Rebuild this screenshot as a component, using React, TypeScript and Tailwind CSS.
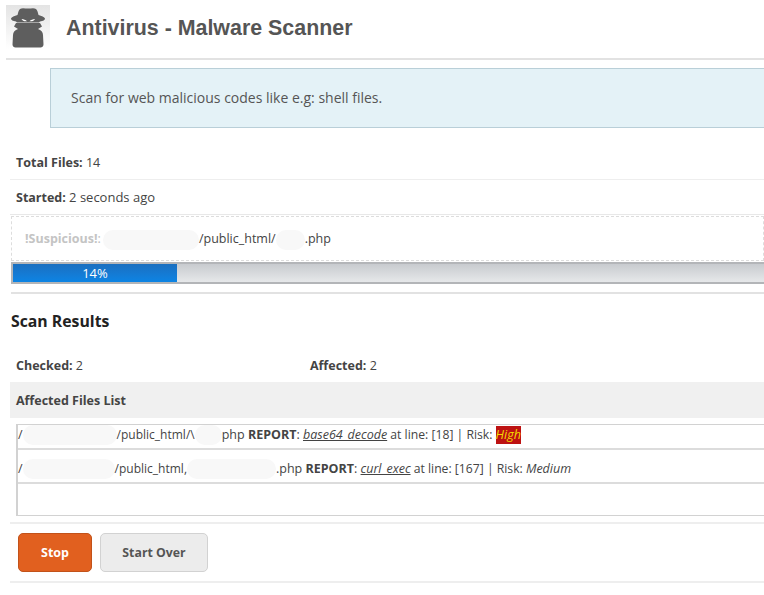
import React from 'react';

const Blob = ({ className }: { className: string }) => (
  <span className={`inline-block align-middle rounded-full bg-[#f8f8f8] ${className}`} />
);

const SpyIcon = () => (
  <div className="w-[44px] h-[44px] shrink-0 bg-gradient-to-b from-[#e4e4e4] to-white">
    <svg viewBox="0 0 44 44" className="w-full h-full">
      {/* hat */}
      <path
        fill="#5e5e5e"
        d="M14 4c2-1.500 5-.5 8-.5s6-1 8 .5c1.500 1.500 2 4 2.500 6 3 1 6 2 6.500 3.500.2 1.500-2 2.500-5 3l-1 1H11l-1-1c-3-.5-5.200-1.500-5-3 .5-1.500 3.500-2.500 6.500-3.500.5-2 1-4.500 2.500-6z"
      />
      {/* face, collar and coat */}
      <path
        fill="#5e5e5e"
        d="M10 18h24l2 3.500-4 2.500c3 1 5 3 5 6l.5 9.500c0 2-1.500 3-3 3H9.500c-1.500 0-3-1-3-3L7 30c0-3 2-5 5-6l-4-2.500z"
      />
      <path fill="#fff" d="M15.500 14c2.200.2 4.200.8 5.500 2.200-2.300.5-4.500-.2-5.500-2.200zM29 14c-2.200.2-4.200.8-5.500 2.200 2.300.5 4.500-.2 5.500-2.200z" />
    </svg>
  </div>
);

export default function App() {
  return (
    <div className="w-[764px] h-[595px] overflow-hidden bg-white text-[#444] text-[12.5px] font-['Open_Sans','Noto_Sans',sans-serif]">
      {/* header */}
      <div className="ml-[6px] h-[60px] pt-[5px] border-b-2 border-[#e2e2e2] flex items-start">
        <SpyIcon />
        <h1 className="ml-[16px] mt-[9px] text-[21.4px] leading-[28px] font-bold text-[#555] font-['Liberation_Sans',Arial,sans-serif]">
          Antivirus - Malware Scanner
        </h1>
      </div>

      <div className="ml-[50px] mt-[8px] h-[60px] pl-[20px] pb-[2px] flex items-center bg-[#e4f2f7] border border-r-0 border-[#b9cfd8] text-[14px] text-[#555]">
        Scan for web malicious codes like e.g: shell files.
      </div>

      <div className="ml-[10px] h-[52px] pt-[26px] pl-[6px] border-b border-[#eee] leading-[18px]">
        <b>Total Files:</b> 14
      </div>
      <div className="ml-[10px] h-[35px] pt-[8px] pl-[6px] border-b border-[#e8e8e8] leading-[18px]">
        <b>Started:</b> <span className="text-[13px]">2 seconds ago</span>
      </div>

      <div className="ml-[11px] mt-[1px] h-[45px] pl-[13px] pt-[2px] flex items-center border border-dashed border-[#ddd] text-[12.5px]">
        <b className="text-[#c4c4c4]">!Suspicious!</b>
        <span className="text-[#bbb]">:</span>
        <Blob className="ml-[2px] w-[96px] h-[20px]" />
        <span>/public_html/</span>
        <Blob className="w-[29px] h-[20px]" />
        <span>.php</span>
      </div>

      <div className="ml-[11px] mt-[1px] h-[22px] border-y-2 border-l-2 border-[#b3b5b8] bg-gradient-to-b from-[#c8cbcf] to-[#e6e8ea] flex">
        <div className="w-[164px] h-[18px] bg-gradient-to-b from-[#1a6fc0] to-[#0c84e4] text-white text-center text-[13px] leading-[19px]">
          14%
        </div>
      </div>

      <div className="ml-[11px] mt-[8px] border-t-2 border-[#e2e2e2]" />

      <h2 className="ml-[11px] mt-[16px] text-[15.8px] leading-[22px] font-bold text-[#222]">Scan Results</h2>

      <div className="ml-[16px] mt-[25px] flex leading-[18px]">
        <div className="w-[294px]">
          <b>Checked:</b> 2
        </div>
        <div>
          <b>Affected:</b> 2
        </div>
      </div>

      <div className="ml-[10px] mt-[7px] h-[36px] pl-[6px] pt-[2px] flex items-center bg-[#f0f0f0] font-bold">Affected Files List</div>

      <div className="ml-[16px] mt-[6px] h-[92px] border-2 border-r-0 border-[#d2d2d2] border-t border-b text-[12.5px]">
        <div className="h-[25px] pb-[3px] flex items-center whitespace-nowrap border-b-2 border-[#dcdcdc]">
          <span>/</span>
          <Blob className="w-[94px] h-[20px]" />
          <span className="text-[12px]">/public_html/\</span>
          <Blob className="w-[27px] h-[20px]" />
          <span>php&nbsp;</span>
          <b>REPORT</b>
          <span>:&nbsp;</span>
          <i className="underline">base64_decode</i>
          <span className="text-[12.2px]">&nbsp;at line: [18] | Risk:&nbsp;</span>
          <i className="bg-[#bd1212] text-[#f2dc00]">High</i>
        </div>
        <div className="h-[34px] pt-[6px] flex items-center whitespace-nowrap border-b-2 border-[#dcdcdc]">
          <span>/</span>
          <Blob className="w-[92px] h-[20px]" />
          <span className="text-[12px]">/public_html,</span>
          <Blob className="w-[89px] h-[20px]" />
          <span>.php&nbsp;</span>
          <b>REPORT</b>
          <span>:&nbsp;</span>
          <i className="underline">curl_exec</i>
          <span className="text-[12.2px]">&nbsp;at line: [167] | Risk:&nbsp;</span>
          <i>Medium</i>
        </div>
      </div>

      <div className="ml-[10px] mt-[6px] h-[61px] pl-[8px] pt-[9px] flex gap-[8px] border-y-2 border-[#eee]">
        <button className="w-[74px] h-[39px] pt-[2px] rounded-[5px] bg-[#e1601f] border border-[#c2521a] text-white font-bold text-[12.5px]">
          Stop
        </button>
        <button className="w-[108px] h-[39px] pt-[2px] rounded-[5px] bg-[#ececec] border border-[#d2d2d2] text-[#555] font-bold text-[12.3px]">
          Start Over
        </button>
      </div>
    </div>
  );
}
